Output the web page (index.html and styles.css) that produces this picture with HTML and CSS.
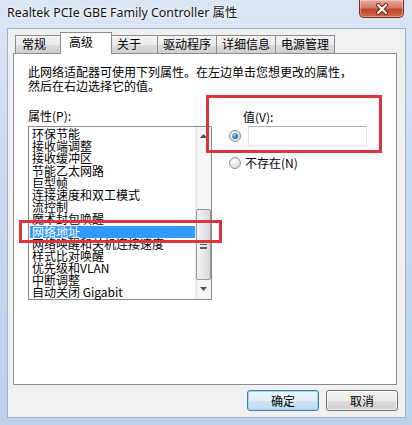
FILE: index.html
```html
<!DOCTYPE html>
<html lang="zh-CN">
<head>
<meta charset="utf-8">
<title>Realtek PCIe GBE Family Controller 属性</title>
<link rel="stylesheet" href="styles.css">
</head>
<body>
<div class="window">
  <div class="titlebar">
    <span class="title">Realtek PCIe GBE Family Controller 属性</span>
    <div class="close">
      <svg width="14" height="12" viewBox="0 0 14 12">
        <path d="M3 2 L11 10 M11 2 L3 10" stroke="#6b1d1a" stroke-width="4" stroke-linecap="round"/>
        <path d="M3 2 L11 10 M11 2 L3 10" stroke="#ffffff" stroke-width="2.2" stroke-linecap="round"/>
      </svg>
    </div>
  </div>
  <div class="client">
    <div class="tabs">
      <div class="tab tab-short">常规</div>
      <div class="tab tab-short tab-active">高级</div>
      <div class="tab tab-short">关于</div>
      <div class="tab tab-long">驱动程序</div>
      <div class="tab tab-long">详细信息</div>
      <div class="tab tab-long">电源管理</div>
    </div>
    <div class="panel">
      <p class="desc">此网络适配器可使用下列属性。在左边单击您想更改的属性，<br>然后在右边选择它的值。</p>
      <div class="cols">
        <div class="col-left">
          <div class="label">属性(P):</div>
          <div class="listbox">
            <ul class="items">
              <li>环保节能</li>
              <li>接收端调整</li>
              <li>接收缓冲区</li>
              <li>节能乙太网路</li>
              <li>巨型帧</li>
              <li>连接速度和双工模式</li>
              <li>流控制</li>
              <li>魔术封包唤醒</li>
              <li class="selected">网络地址</li>
              <li>网络唤醒和关机连接速度</li>
              <li>样式比对唤醒</li>
              <li>优先级和VLAN</li>
              <li>中断调整</li>
              <li>自动关闭 Gigabit</li>
            </ul>
            <div class="scrollbar">
              <svg class="arrow" width="7" height="4" viewBox="0 0 7 4"><path d="M0 4 L3.5 0 L7 4 Z" fill="#4d4d4d"/></svg>
              <div class="track">
                <div class="thumb"><span class="grip"></span></div>
              </div>
              <svg class="arrow" width="7" height="4" viewBox="0 0 7 4"><path d="M0 0 L3.5 4 L7 0 Z" fill="#4d4d4d"/></svg>
            </div>
          </div>
        </div>
        <div class="col-right">
          <div class="val-label">值(V):</div>
          <div class="opt-row">
            <span class="radio checked"></span>
            <span class="textbox"></span>
          </div>
          <div class="opt-row opt-row2">
            <span class="radio"></span>
            <span class="opt-text">不存在(N)</span>
          </div>
        </div>
      </div>
      <div class="mark mark-value"></div>
      <div class="mark mark-item"></div>
    </div>
    <div class="buttons">
      <div class="btn btn-default">确定</div>
      <div class="btn">取消</div>
    </div>
  </div>
</div>
</body>
</html>
```
FILE: styles.css
```css
* { box-sizing: border-box; }
html, body { margin: 0; padding: 0; }
body {
  width: 412px;
  height: 425px;
  overflow: hidden;
  background: linear-gradient(to bottom, #dbe6f4 0%, #c9daef 40%, #bcd1ec 100%);
  font-family: "Noto Sans CJK SC", sans-serif;
  font-size: 12px;
  color: #000;
}
.window { width: 412px; height: 425px; }
.titlebar {
  height: 28px;
  display: flex;
  align-items: flex-start;
  justify-content: space-between;
  padding-left: 7px;
  padding-right: 8px;
}
.title {
  font-family: "Noto Sans", "Noto Sans CJK SC", sans-serif;
  font-size: 12.4px;
  line-height: 16px;
  margin-top: 5px;
  color: #111;
  text-shadow: 0 0 6px #ffffff, 0 0 3px #ffffff;
}
.close {
  width: 45px;
  height: 18px;
  border: 1px solid #7a2b25;
  border-top: none;
  border-radius: 0 0 5px 5px;
  background: linear-gradient(to bottom, #e8a99a 0%, #d47a66 45%, #c2432a 55%, #d06b4f 100%);
  box-shadow: inset 0 0 0 1px rgba(255,255,255,0.35);
  display: flex;
  align-items: center;
  justify-content: center;
}
.client {
  margin-left: 7px;
  width: 399px;
  height: 390px;
  background: #f0f0f0;
  border: 1px solid #9fb1c8;
  padding-left: 5px;
}
.tabs {
  display: flex;
  align-items: flex-end;
  height: 24px;
  padding-left: 2px;
  position: relative;
  z-index: 2;
}
.tab {
  height: 18px;
  line-height: 16px;
  border: 1px solid #898c95;
  border-bottom: none;
  background: linear-gradient(to bottom, #f3f3f3 0%, #ebebeb 50%, #dddddd 51%, #cfcfcf 100%);
  margin-right: -1px;
  white-space: nowrap;
}
.tab-short { padding: 0 5px 0 6px; width: 48px; }
.tab-long { padding: 0 5px; }
.tab-active {
  height: 22px;
  margin-bottom: -1px;
  margin-left: -2px;
  margin-right: -2px;
  width: 52px;
  padding-left: 8px;
  background: #ffffff;
  line-height: 18px;
  position: relative;
  z-index: 3;
}
.panel {
  position: relative;
  width: 384px;
  height: 332px;
  background: #ffffff;
  border: 1px solid #898c95;
  padding: 11px 0 0 14px;
}
.desc {
  margin: 0;
  line-height: 14px;
  white-space: nowrap;
}
.cols {
  display: flex;
  align-items: flex-start;
  margin-top: 16px;
}
.col-left { width: 184px; }
.label { line-height: 14px; height: 14px; }
.listbox {
  margin-top: 3px;
  width: 184px;
  height: 174px;
  border: 1px solid #828790;
  display: flex;
  background: #fff;
}
.items {
  list-style: none;
  margin: 0;
  padding: 1px 0 0 1px;
  flex: 1;
  line-height: 12.2px;
  white-space: nowrap;
}
.items li { padding-left: 2px; height: 12.2px; }
.items li.selected { background: #3399ff; color: #fff; }
.scrollbar {
  width: 16px;
  display: flex;
  flex-direction: column;
  align-items: center;
  background: linear-gradient(to right, #e6e6e6, #f6f6f6 30%, #f6f6f6);
  padding: 7px 0 8px;
}
.arrow { flex: none; }
.track { flex: 1; width: 100%; padding-top: 71px; }
.thumb {
  width: 15px;
  margin-left: 1px;
  height: 71px;
  border: 1px solid #979797;
  border-radius: 2px;
  background: linear-gradient(to right, #f2f2f2 0%, #e8e8e8 50%, #d7d7d7 100%);
  display: flex;
  justify-content: center;
  padding-top: 34px;
}
.grip {
  width: 7px;
  height: 5px;
  border-top: 1px solid #5a5a5a;
  border-bottom: 1px solid #5a5a5a;
  background: linear-gradient(to bottom, transparent 2px, #5a5a5a 2px, #5a5a5a 3px, transparent 3px);
}
.col-right {
  margin-left: 17px;
  padding-top: 1px;
}
.val-label { line-height: 14px; padding-left: 14px; }
.opt-row {
  display: flex;
  align-items: center;
  margin-top: 2px;
  height: 20px;
}
.opt-row2 { margin-top: 10px; height: 14px; }
.radio {
  width: 12px;
  height: 12px;
  border-radius: 50%;
  border: 1px solid #8e8f8f;
  background: radial-gradient(circle at 40% 35%, #ffffff 0%, #e4e4e4 60%, #cfcfcf 100%);
  position: relative;
  flex: none;
}
.radio.checked::after {
  content: "";
  position: absolute;
  left: 2px;
  top: 2px;
  width: 6px;
  height: 6px;
  border-radius: 50%;
  background: radial-gradient(circle at 35% 30%, #9fd3f7 0%, #2c7bc2 55%, #154f86 100%);
}
.textbox {
  margin-left: 7px;
  width: 119px;
  height: 20px;
  background: #fff;
  border: 1px solid #e2e3ea;
  border-top-color: #abadb3;
  border-bottom-color: #e3e9ef;
}
.opt-text { margin-left: 4px; line-height: 14px; }
.mark {
  position: absolute;
  border: 3px solid #d8353d;
}
.mark-value { left: 192px; top: 41px; width: 176px; height: 58px; }
.mark-item { left: 5px; top: 166px; width: 203px; height: 23px; }
.buttons {
  display: flex;
  justify-content: flex-end;
  gap: 7px;
  margin-top: 5px;
  padding-right: 7px;
}
.btn {
  width: 72px;
  height: 21px;
  line-height: 19px;
  text-align: center;
  border: 1px solid #707070;
  border-radius: 3px;
  background: linear-gradient(to bottom, #f2f2f2 0%, #ebebeb 50%, #dddddd 51%, #cfcfcf 100%);
  box-shadow: inset 0 0 0 1px rgba(255,255,255,0.6);
}
.btn-default {
  border-color: #3c7fb1;
  background: linear-gradient(to bottom, #ecf5fb 0%, #e1eef8 50%, #cfe4f3 51%, #c0dbef 100%);
  box-shadow: inset 0 0 0 1px #a5d4f0;
}
```
